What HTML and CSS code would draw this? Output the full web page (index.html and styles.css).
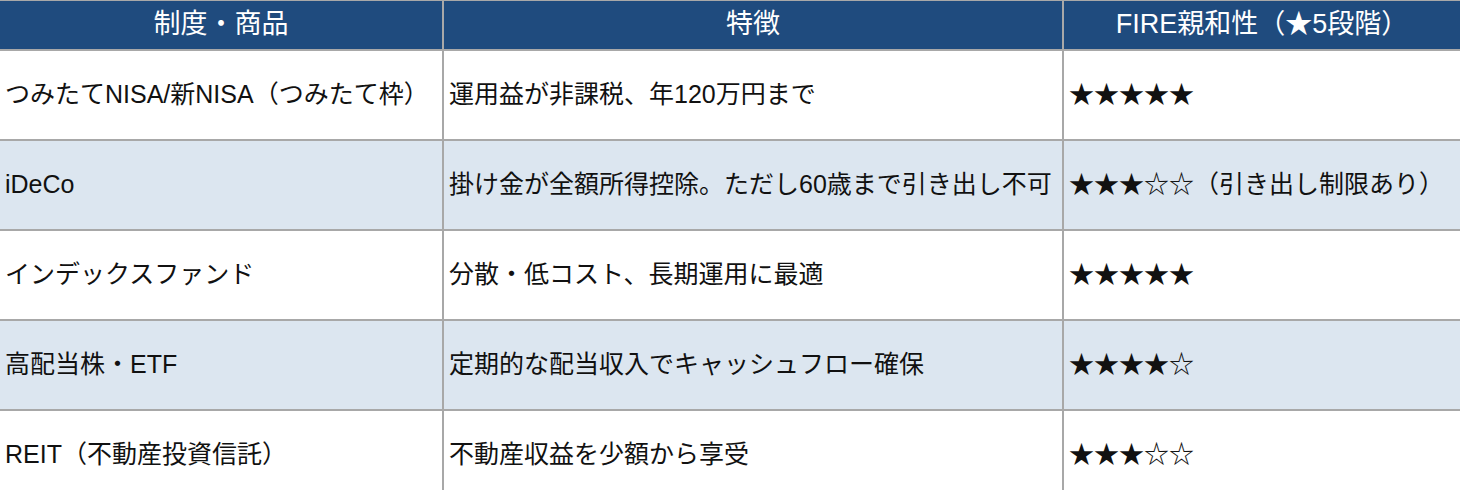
FILE: index.html
```html
<!DOCTYPE html>
<html lang="ja">
<head>
<meta charset="utf-8">
<title>FIRE親和性</title>
<link rel="stylesheet" href="styles.css">
</head>
<body>
<div class="table" role="table">
  <div class="cell head" role="columnheader">制度・商品</div>
  <div class="cell head" role="columnheader">特徴</div>
  <div class="cell head" role="columnheader">FIRE親和性（★5段階）</div>

  <div class="cell">つみたてNISA/新NISA（つみたて枠）</div>
  <div class="cell">運用益が非課税、年120万円まで</div>
  <div class="cell">★★★★★</div>

  <div class="cell alt">iDeCo</div>
  <div class="cell alt">掛け金が全額所得控除。ただし60歳まで引き出し不可</div>
  <div class="cell alt">★★★☆☆（引き出し制限あり）</div>

  <div class="cell">インデックスファンド</div>
  <div class="cell">分散・低コスト、長期運用に最適</div>
  <div class="cell">★★★★★</div>

  <div class="cell alt">高配当株・ETF</div>
  <div class="cell alt">定期的な配当収入でキャッシュフロー確保</div>
  <div class="cell alt">★★★★☆</div>

  <div class="cell">REIT（不動産投資信託）</div>
  <div class="cell">不動産収益を少額から享受</div>
  <div class="cell">★★★☆☆</div>
</div>
</body>
</html>
```
FILE: styles.css
```css
html, body {
  margin: 0;
  padding: 0;
  overflow: hidden;
  background: #ffffff;
}

body {
  font-family: "Liberation Sans", "Noto Sans CJK JP", sans-serif;
  color: #111111;
}

.table {
  display: grid;
  grid-template-columns: 442px 618px 396px;
  grid-template-rows: 48px repeat(5, 88px);
  gap: 2px;
  padding-top: 1px;
  width: 1460px;
  background: #a8a8a8;
}

.cell {
  display: flex;
  align-items: center;
  padding: 0 5px 3px 5px;
  background: #ffffff;
  font-size: 25px;
  line-height: 1.2;
  white-space: nowrap;
  overflow: hidden;
}

.cell.alt {
  background: #dce6f0;
}

.cell.head {
  justify-content: center;
  padding: 0 5px 2px 5px;
  background: #1f4b7e;
  color: #ffffff;
  font-size: 27px;
}
```
